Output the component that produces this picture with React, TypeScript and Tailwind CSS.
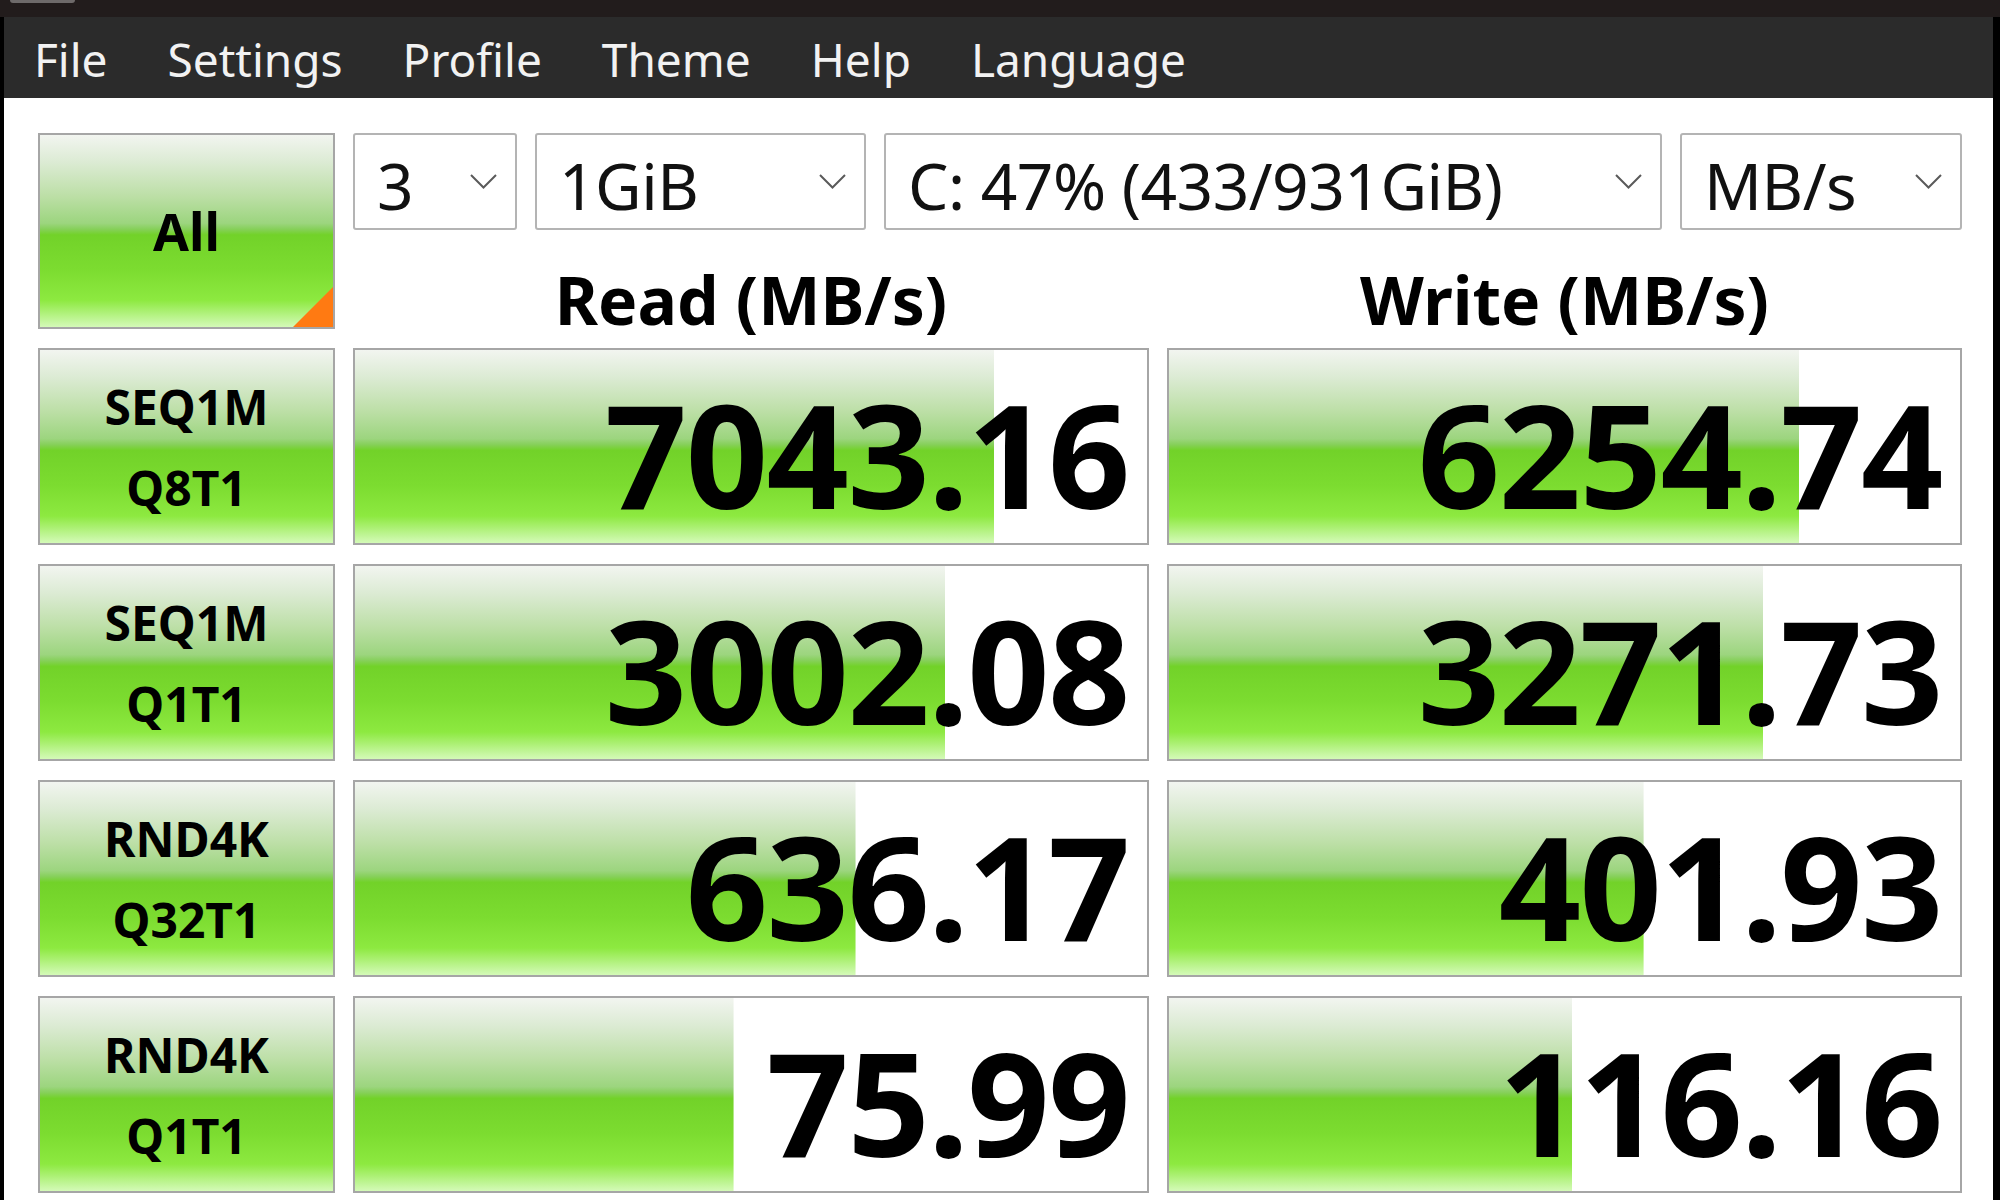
import React from "react";

const FONT = { fontFamily: '"Noto Sans", "Open Sans", Arial, sans-serif' };

const GREEN =
  "bg-[linear-gradient(to_bottom,#f2f5f0_0%,#dcebd4_14%,#bcdfa6_32%,#9cd57e_46%,#86d05a_49%,#72d229_52%,#7cdc30_70%,#8de940_86%,#d4fab8_100%)]";

interface Result {
  l1: string;
  l2: string;
  read: string;
  readPct: number;
  write: string;
  writePct: number;
}

const RESULTS: Result[] = [
  { l1: "SEQ1M", l2: "Q8T1", read: "7043.16", readPct: 80.7, write: "6254.74", writePct: 79.7 },
  { l1: "SEQ1M", l2: "Q1T1", read: "3002.08", readPct: 74.5, write: "3271.73", writePct: 75.1 },
  { l1: "RND4K", l2: "Q32T1", read: "636.17", readPct: 63.2, write: "401.93", writePct: 60.0 },
  { l1: "RND4K", l2: "Q1T1", read: "75.99", readPct: 47.8, write: "116.16", writePct: 51.0 },
];

const MENU = ["File", "Settings", "Profile", "Theme", "Help", "Language"];

const Chevron = () => (
  <svg width="27" height="15" viewBox="0 0 27 15" className="shrink-0">
    <polyline points="1,1 13.5,13.5 26,1" fill="none" stroke="#5a5a5a" strokeWidth="2" />
  </svg>
);

const Combo: React.FC<{ value: string; width: string }> = ({ value, width }) => (
  <div
    className={`${width} h-[97px] border-2 border-[#b4b4b4] rounded-[3px] bg-white flex items-center justify-between pl-[22px] pr-[18px]`}
  >
    <span className="text-[64px] leading-none pt-[9px] text-[#111] tracking-[-0.5px]">{value}</span>
    <Chevron />
  </div>
);

const Meter: React.FC<{ value: string; pct: number }> = ({ value, pct }) => (
  <div
    className={`h-[197px] border-2 border-[#a6a6a6] bg-white ${GREEN} bg-no-repeat flex items-center justify-end pr-[18px]`}
    style={{ backgroundSize: `${pct}% 100%` }}
  >
    <span className="text-[144px] font-bold leading-none pt-[12px] text-black tracking-[-1.5px]">{value}</span>
  </div>
);

export default function App() {
  return (
    <div className="w-[2000px] h-[1200px] bg-[#221c1c] flex flex-col overflow-hidden" style={FONT}>
      <div className="h-[17px] shrink-0 pl-[10px]">
        <div className="w-[65px] h-[3px] bg-[#6e6a6a] rounded-b-[3px]" />
      </div>
      <div className="flex-1 flex bg-black pl-[4px] pr-[7px]">
        <div className="flex-1 flex flex-col bg-white">
          <div className="h-[81px] bg-[#2b2b2b] flex items-center gap-[60px] pl-[30px] text-[46px] leading-none text-[#f2f2f2]">
            {MENU.map((m) => (
              <span key={m} className="pt-[3px]">
                {m}
              </span>
            ))}
          </div>

          <div className="pt-[35px] pl-[34px] pr-[31px] grid grid-cols-[297px_796px_795px] gap-x-[18px] gap-y-[19px]">
            <div className={`relative h-[196px] border-2 border-[#a6a6a6] ${GREEN} flex items-center justify-center`}>
              <span className="text-[52px] font-bold leading-none text-black">All</span>
              <div className="absolute right-0 bottom-0 w-[40px] h-[40px] bg-[#ff7a12] [clip-path:polygon(100%_0,100%_100%,0_100%)]" />
            </div>

            <div className="col-span-2 flex flex-col">
              <div className="flex gap-[18px]">
                <Combo value="3" width="w-[164px]" />
                <Combo value="1GiB" width="w-[331px]" />
                <Combo value="C: 47% (433/931GiB)" width="w-[778px]" />
                <Combo value="MB/s" width="w-[282px]" />
              </div>
              <div className="h-[99px] grid grid-cols-[796px_795px] gap-x-[18px] text-[66px] font-bold leading-none text-black">
                <div className="text-center pt-[36px]">Read (MB/s)</div>
                <div className="text-center pt-[36px]">Write (MB/s)</div>
              </div>
            </div>

            {RESULTS.map((r, i) => (
              <React.Fragment key={i}>
                <div
                  className={`h-[197px] border-2 border-[#a6a6a6] ${GREEN} flex flex-col items-center justify-center text-[48px] font-bold leading-[81px] text-black`}
                >
                  <span>{r.l1}</span>
                  <span>{r.l2}</span>
                </div>
                <Meter value={r.read} pct={r.readPct} />
                <Meter value={r.write} pct={r.writePct} />
              </React.Fragment>
            ))}
          </div>
        </div>
      </div>
    </div>
  );
}
